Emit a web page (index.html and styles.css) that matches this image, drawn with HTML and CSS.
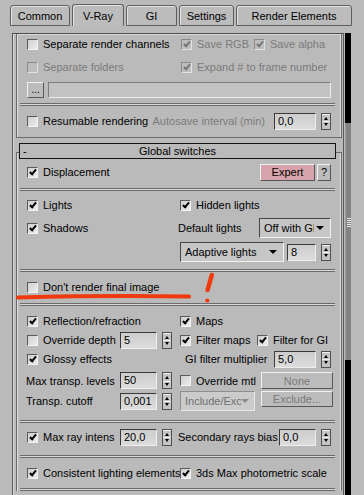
FILE: index.html
```html
<!DOCTYPE html>
<html lang="en">
<head>
<meta charset="UTF-8">
<title>Render Setup - V-Ray</title>
<link rel="stylesheet" href="styles.css">
</head>
<body>
<div class="tabs">
  <div class="tab t1">Common</div>
  <div class="tab t2 on">V-Ray</div>
  <div class="tab t3">GI</div>
  <div class="tab t4">Settings</div>
  <div class="tab t5">Render Elements</div>
</div>

<div class="main">
  <div class="panel">
    <!-- frame buffer rollout (scrolled, top hidden) -->
    <div class="roll r1">
      <div class="row first">
        <div class="c1"><span class="cb"></span><span class="lb">Separate render channels</span></div>
        <div class="c2 s1">
          <div class="pair w73"><span class="cb dis x"></span><span class="lb off">Save RGB</span></div>
          <span class="cb dis x"></span><span class="lb off">Save alpha</span>
        </div>
      </div>
      <div class="row r-gap5">
        <div class="c1"><span class="cb dis"></span><span class="lb off">Separate folders</span></div>
        <div class="c2 s1"><span class="cb dis x"></span><span class="lb off">Expand # to frame number</span></div>
      </div>
      <div class="row h16 r-gap6">
        <div class="btn dots">...</div>
        <div class="path"></div>
      </div>
      <div class="sep sep-r1"></div>
      <div class="row r-gap6">
        <span class="cb"></span><span class="lb">Resumable rendering</span>
        <span class="lb off auto-l">Autosave interval (min)</span>
        <div class="fld w42 ml9">0,0</div><div class="spin"><i></i><i></i></div>
      </div>
    </div>

    <!-- global switches rollout -->
    <div class="head"><span class="minus">-</span><span>Global switches</span><span></span></div>
    <div class="roll r2">
      <div class="sec">
        <div class="row">
          <span class="cb x"></span><span class="lb">Displacement</span>
          <div class="btn expert">Expert</div>
          <div class="btn q">?</div>
        </div>
      </div>
      <div class="sep"></div>
      <div class="sec sec-b">
        <div class="row">
          <div class="c1"><span class="cb x"></span><span class="lb">Lights</span></div>
          <div class="c2"><span class="cb x"></span><span class="lb">Hidden lights</span></div>
        </div>
        <div class="row h20 r-gap4">
          <div class="c1"><span class="cb x"></span><span class="lb">Shadows</span></div>
          <div class="c2">
            <span class="lb nudge">Default lights</span>
            <div class="dd w72"><span class="dd-t t55">Off with GI</span><span class="arr"></span></div>
          </div>
        </div>
        <div class="row h20 r-gap4">
          <div class="c1"></div>
          <div class="c2">
            <div class="dd w104"><span class="dd-t">Adaptive lights</span><span class="arr"></span></div>
            <div class="fld w29 auto-l">8</div><div class="spin"><i></i><i></i></div>
          </div>
        </div>
      </div>
      <div class="sep"></div>
      <div class="sec sec-c">
        <div class="row">
          <div class="c1"><span class="cb"></span><span class="lb">Don't render final image</span></div>
        </div>
      </div>
      <div class="sep"></div>
      <div class="sec sec-d">
        <div class="row">
          <div class="c1"><span class="cb x"></span><span class="lb">Reflection/refraction</span></div>
          <div class="c2"><span class="cb x"></span><span class="lb">Maps</span></div>
        </div>
        <div class="row r-gap1">
          <div class="c1"><span class="cb"></span><span class="lb">Override depth</span><div class="fld w37 auto-l">5</div><div class="spin"><i></i><i></i></div></div>
          <div class="c2">
            <div class="pair w77"><span class="cb x"></span><span class="lb">Filter maps</span></div>
            <span class="cb x"></span><span class="lb">Filter for GI</span>
          </div>
        </div>
        <div class="row r-gap1">
          <div class="c1"><span class="cb x"></span><span class="lb">Glossy effects</span></div>
          <div class="c2"><span class="lb">GI filter multiplier</span><div class="fld w42 auto-l">5,0</div><div class="spin"><i></i><i></i></div></div>
        </div>
        <div class="row h19 r-gap3">
          <div class="c1"><span class="lb plain">Max transp. levels</span><div class="fld w37 auto-l">50</div><div class="spin"><i></i><i></i></div></div>
          <div class="c2"><span class="cb"></span><span class="lb">Override mtl</span><div class="btn wide auto-l off">None</div></div>
        </div>
        <div class="row h20 r-gap1">
          <div class="c1"><span class="lb plain">Transp. cutoff</span><div class="fld w37 auto-l">0,001</div><div class="spin"><i></i><i></i></div></div>
          <div class="c2">
            <div class="dd dd-off w75"><span class="dd-t t58">Include/Exclude</span><span class="arr"></span></div>
            <div class="btn wide top auto-l off">Exclude...</div>
          </div>
        </div>
      </div>
      <div class="sep"></div>
      <div class="sec sec-e">
        <div class="row">
          <div class="c1"><span class="cb x"></span><span class="lb">Max ray intens</span><div class="fld w37 auto-l">20,0</div><div class="spin"><i></i><i></i></div></div>
          <div class="c2"><span class="lb nudge">Secondary rays bias</span><div class="fld w37 auto-l">0,0</div><div class="spin"><i></i><i></i></div></div>
        </div>
      </div>
      <div class="sep"></div>
      <div class="sec sec-f">
        <div class="row">
          <div class="c1"><span class="cb x"></span><span class="lb">Consistent lighting elements</span></div>
          <div class="c2"><span class="cb x"></span><span class="lb">3ds Max photometric scale</span></div>
        </div>
      </div>
      <div class="sep"></div>
    </div>
  </div>
  <div class="scroll"><div class="thumb"><div class="grip"></div></div></div>
</div>

<!-- red marker scribble drawn over the screenshot -->
<svg class="marker" width="364" height="495" viewBox="0 0 364 495">
  <path d="M18 297.5 C 60 296.5, 140 295.8, 189 296.6" fill="none" stroke="#f03a0e" stroke-width="4" stroke-linecap="round"/>
  <path d="M211.8 275 L 207.6 290" fill="none" stroke="#f03a0e" stroke-width="4.5" stroke-linecap="round"/>
  <circle cx="207.3" cy="300.5" r="2.1" fill="#f03a0e"/>
</svg>
</body>
</html>
```

FILE: styles.css
```css
body{margin:0;background:#bababa;font:11px "Liberation Sans",Arial,sans-serif;color:#000;position:relative;height:495px;overflow:hidden;}

.tabs{display:flex;align-items:flex-start;height:33px;padding:4px 0 0 10px;box-sizing:border-box;}
.tab{box-sizing:border-box;height:21px;margin-top:1px;margin-right:2px;border:1px solid #5e5e5e;border-radius:3px 3px 0 0;box-shadow:inset 1px 1px #e4e4e4;display:flex;align-items:center;justify-content:center;background:#bcbcbc;}
.tab.on{height:22px;margin-top:0;border-bottom:none;}
.t1{width:60px;}
.t2{width:52px;}
.t3{width:51px;}
.t4{width:55px;}
.t5{width:116px;}

.main{display:flex;height:462px;}
.panel{width:332px;box-sizing:border-box;margin-left:12px;padding:0 1px 0 3px;border-top:1px solid #4e4e4e;border-left:1px solid #5a5a5a;border-right:1px solid #5a5a5a;box-shadow:inset 1px 1px #d8d8d8;}
.scroll{width:6px;margin-left:1px;background:#000;}
.thumb{margin-top:90px;height:237px;box-sizing:border-box;background:#838383;border-left:1px solid #9c9c9c;display:flex;flex-direction:column;align-items:center;padding-top:95px;}
.grip{width:4px;height:9px;background:repeating-linear-gradient(#e6e6e6 0 1px,transparent 1px 2px);}

.roll{border-left:1px solid #6a6a6a;border-right:1px solid #6a6a6a;box-shadow:inset 1px 0 #dedede,inset -1px 0 #dedede;padding:0 10px;}
.r1{border-bottom:1px solid #6a6a6a;padding-top:1px;padding-bottom:7px;}
.r2{margin-top:-7px;border-top:1px solid #6a6a6a;padding-top:10px;}

.head{margin:5px 0 0 3px;width:317px;height:16px;box-sizing:border-box;border:1px solid #141414;display:grid;grid-template-columns:1fr auto 1fr;align-items:center;position:relative;z-index:1;background:#bababa;}
.minus{padding-left:3px;}

.row{display:flex;align-items:center;height:18px;white-space:nowrap;}
.h16{height:16px;}
.h19{height:19px;}
.h20{height:20px;}
.r-gap1{margin-top:1px;}
.r-gap3{margin-top:3px;}
.r-gap4{margin-top:4px;}
.r-gap5{margin-top:5px;}
.r-gap6{margin-top:6px;}
.c1{width:153px;flex-shrink:0;display:flex;align-items:center;padding-right:8px;box-sizing:border-box;height:100%;}
.c2{flex:1;display:flex;align-items:center;height:100%;}
.s1{padding-left:1px;}
.pair{display:flex;align-items:center;flex-shrink:0;}
.w73{width:73px;}
.w77{width:77px;}

.sec-b{padding:5px 0 7px;}
.sec{padding-bottom:7px;}
.sec-c{padding:6px 0 7px;}
.sec-d{padding:6px 0 9px;}
.sec-e{padding:5px 0 9px;}
.sec-f{padding:6px 0 6px;}

.sep{height:1px;border-top:1px solid #6b6b6b;border-bottom:1px solid #6b6b6b;background:#d9d9d9;margin:0 -4px 0 -7px;}
.sep-r1{margin-top:5px;}

.cb{width:9px;height:9px;flex-shrink:0;position:relative;border:1px solid;border-color:#5a5a5a #f2f2f2 #f2f2f2 #5a5a5a;background:linear-gradient(135deg,#cfcfcf,#ececec);}
.cb.dis{background:#bdbdbd;border-color:#8a8a8a #e2e2e2 #e2e2e2 #8a8a8a;}
.cb.x::after{content:"";position:absolute;left:3px;top:0;width:2px;height:5px;border:solid #000;border-width:0 2px 2px 0;transform:rotate(40deg);}
.cb.dis.x::after{border-color:#777;}
.lb{margin-left:5px;}
.lb.plain{margin-left:-1px;}
.lb.nudge{margin-left:-2px;}
.off{color:#7a7a7a;}
.auto-l{margin-left:auto;}
.ml9{margin-left:9px;}

.fld{height:17px;box-sizing:border-box;flex-shrink:0;border:1px solid;border-color:#3a3a3a #eeeeee #eeeeee #3a3a3a;background:linear-gradient(#cdcdcd,#dcdcdc);padding-left:3px;line-height:15px;overflow:hidden;}
.w29{width:29px;}
.w37{width:37px;}
.w42{width:42px;}
.spin{width:10px;height:17px;margin-left:5px;flex-shrink:0;display:flex;flex-direction:column;border:1px solid #505050;box-sizing:border-box;}
.spin i{flex:1;position:relative;background:#c4c4c4;border-top:1px solid #f0f0f0;}
.spin i::after{content:"";position:absolute;left:2px;top:2px;border:2px solid transparent;}
.spin i:first-child::after{border-bottom:3px solid #000;border-top:0;}
.spin i:last-child::after{border-top:3px solid #000;border-bottom:0;top:1px;}

.btn{height:17px;box-sizing:border-box;flex-shrink:0;border:1px solid;border-color:#f0f0f0 #585858 #585858 #f0f0f0;background:#bcbcbc;display:flex;align-items:center;justify-content:center;}
.dots{width:17px;height:16px;align-items:flex-end;padding-bottom:2px;font-size:10px;}
.path{flex:1;height:16px;margin-left:4px;box-sizing:border-box;border:1px solid;border-color:#7c7c7c #ececec #ececec #7c7c7c;background:#c2c2c2;}
.expert{width:55px;margin-left:auto;background:#d6a4aa;}
.q{width:14px;margin-left:2px;}
.wide{width:72px;margin-right:-2px;}
.top{align-self:flex-start;height:16px;}

.dd{height:20px;box-sizing:border-box;flex-shrink:0;display:flex;align-items:center;border:1px solid;border-color:#454545 #f2f2f2 #f2f2f2 #454545;background:#c6c6c6;padding-left:4px;}
.dd-t{overflow:hidden;flex:1;}
.t55{flex:none;width:50px;}
.t58{flex:none;width:56px;}
.arr{margin:0 6px 0 auto;border:4px solid transparent;border-top:4px solid #000;border-bottom:0;}
.w72{width:72px;margin-left:auto;}
.w104{width:104px;}
.w75{width:75px;}
.dd-off{background:#cbcbcb;border-color:#8e8e8e #e8e8e8 #e8e8e8 #8e8e8e;color:#707070;}
.dd-off .arr{border-top-color:#8a8a8a;}

.marker{position:absolute;left:0;top:0;pointer-events:none;}
```
